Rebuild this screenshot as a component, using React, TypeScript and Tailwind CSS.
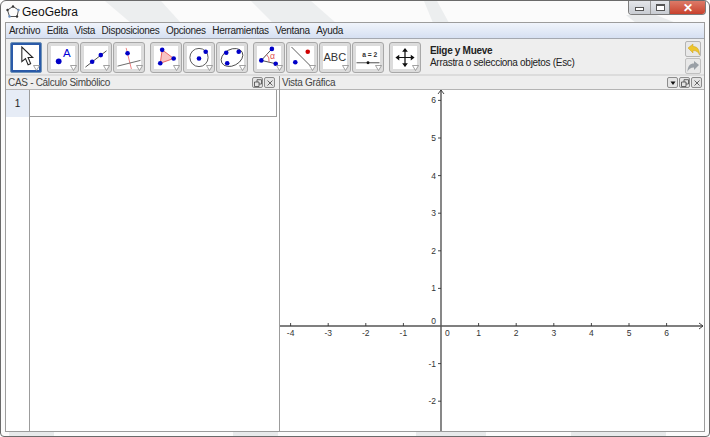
const font = "font-['Liberation_Sans',Arial,sans-serif]";

function Arrow() {
    return (
        <svg className="absolute right-[1px] bottom-[1px]" width="7" height="6" viewBox="0 0 7 6">
            <path d="M0.500 0.500h6L3.500 5.500z" fill="#fff" stroke="#8a8a8a" strokeWidth="0.8" />
        </svg>
    );
}

function ToolButton({ selected, arrow = true, children }: { selected?: boolean, arrow?: boolean, children: React.ReactNode }) {
    return (
        <div className={selected
            ? "relative w-[32px] h-[31px] rounded-[2px] border border-[#6f93b8] bg-[#2a5aa8] p-[2px]"
            : "relative w-[32px] h-[31px] rounded-[3px] border border-[#a8a8a8] bg-[#dcdcdc] p-[3px]"}>
            <div className="w-full h-full bg-white overflow-hidden">
                <svg width="100%" height="100%" viewBox="0 0 24 24">{children}</svg>
            </div>
            {arrow && <Arrow />}
        </div>
    );
}

const dot = (x: number, y: number, r = 2.4, c = "#0000c8") => <circle cx={x} cy={y} r={r} fill={c} />;

function Toolbar() {
    return (
        <div className="h-[38px] bg-[#eeeeee] border-t border-[#a4a8b0] border-b-2 border-b-[#dcdcdc] flex items-start pt-[3px] pl-[4px] pr-[3px]">
            <div className="flex gap-[5px]">
                <ToolButton selected>
                    <path d="M8 2v14l3.500-3 2.500 6 2.500-1-2.500-6h4.500z" fill="#fff" stroke="#222" strokeWidth="1" />
                </ToolButton>
                <div className="flex gap-[1px]">
                    <ToolButton>
                        {dot(7.500, 16, 3)}
                        <text x="12" y="11" fontSize="12" fill="#0000d8" fontFamily="Liberation Sans">A</text>
                    </ToolButton>
                    <ToolButton>
                        <path d="M1 22 23 5" stroke="#333" strokeWidth="0.9" />
                        {dot(8, 16.500)}{dot(17, 9.500)}
                    </ToolButton>
                    <ToolButton>
                        <path d="M9 2l6 24" stroke="#f08080" strokeWidth="1" />
                        <path d="M0 21 24 15" stroke="#555" strokeWidth="0.9" />
                        {dot(10.500, 7.500)}
                    </ToolButton>
                </div>
                <div className="flex gap-[1px]">
                    <ToolButton>
                        <path d="M8 4l12 9-14 5z" fill="#f8c4c4" stroke="#e86060" strokeWidth="1" />
                        {dot(8, 4)}{dot(20, 13)}{dot(6, 18)}
                    </ToolButton>
                    <ToolButton>
                        <circle cx="12" cy="12" r="9.500" fill="none" stroke="#444" strokeWidth="0.9" />
                        {dot(12, 13)}{dot(19, 6)}
                    </ToolButton>
                    <ToolButton>
                        <ellipse cx="12" cy="12" rx="12" ry="8.500" transform="rotate(-28 12 12)" fill="none" stroke="#444" strokeWidth="0.9" />
                        {dot(6, 7)}{dot(19, 6)}{dot(7, 18)}
                    </ToolButton>
                </div>
                <div className="flex gap-[1px]">
                    <ToolButton>
                        <path d="M15 3 4 15l15 3.500" fill="none" stroke="#333" strokeWidth="0.9" />
                        <path d="M9.500 9a8 8 0 0 1 2.500 7.500" fill="none" stroke="#e05050" strokeWidth="0.9" />
                        <text x="13" y="14" fontSize="9" fill="#e05050" fontFamily="Liberation Sans">α</text>
                        {dot(15, 3)}{dot(4, 15)}{dot(19, 18.500)}
                    </ToolButton>
                    <ToolButton>
                        <path d="M1 1 23 23" stroke="#444" strokeWidth="0.9" />
                        {dot(5, 17)}{dot(18, 6, 2.400, "#d00000")}
                    </ToolButton>
                    <ToolButton>
                        <text x="0" y="16" fontSize="11.500" fill="#333" fontFamily="Liberation Sans">ABC</text>
                    </ToolButton>
                    <ToolButton>
                        <text x="6" y="11" fontSize="7" fontWeight="700" fill="#333" fontFamily="Liberation Sans">a = 2</text>
                        <path d="M0 17.500H24" stroke="#333" strokeWidth="0.9" />
                        {dot(12, 17.500, 1.500, "#111")}
                    </ToolButton>
                </div>
                <ToolButton>
                    <path d="M12 3v18M3 12h18" stroke="#111" strokeWidth="1.300" />
                    <path d="M12 2l3 4H9zM12 22l3-4H9zM2 12l4-3v6zM22 12l-4-3v6z" fill="#111" />
                </ToolButton>
            </div>
            <div className="ml-[9px] mt-[3px] flex-1 text-[10px] tracking-[-0.3px] leading-[12px] text-[#222]">
                <div className="font-bold">Elige y Mueve</div>
                <div>Arrastra o selecciona objetos (Esc)</div>
            </div>
            <div className="flex flex-col gap-[1px] -mt-[1px]">
                <div className="w-[16px] h-[16px] rounded-[2px] border border-[#b4b4b4] bg-[#e8e8e8] flex items-center justify-center">
                    <svg width="13" height="13" viewBox="0 0 13 13"><path d="M1 5l5-4v2.500c4 0 6.500 2.500 6.500 8.500-1-3-3-4.500-6.500-4.500V10z" fill="#eec52c" stroke="#c8a020" strokeWidth="0.5" /></svg>
                </div>
                <div className="w-[16px] h-[16px] rounded-[2px] border border-[#c0c0c0] bg-[#e8e8e8] flex items-center justify-center">
                    <svg width="13" height="13" viewBox="0 0 13 13"><path d="M12 5 7 1v2.500C3 3.500 0.500 6 0.500 12c1-3 3-4.500 6.500-4.500V10z" fill="#9aa0a6" /></svg>
                </div>
            </div>
        </div>
    );
}

function HeaderButton({ children }: { children: React.ReactNode }) {
    return (
        <div className="w-[11px] h-[11px] rounded-[2px] border border-[#8c8c8c] bg-[#e4e4e4] flex items-center justify-center">
            <svg width="8" height="8" viewBox="0 0 8 8">{children}</svg>
        </div>
    );
}

const restore = <path d="M0.500 3h4.500v4.500H0.500zM3 3V0.700h4.500v4.300H5" fill="none" stroke="#444" strokeWidth="0.8" />;
const close = <path d="M1.500 1.500l5 5M6.500 1.500l-5 5" stroke="#555" strokeWidth="0.9" />;

const xTicks = [-4, -3, -2, -1, 1, 2, 3, 4, 5, 6];
const yTicks = [6, 5, 4, 3, 2, 1, -1, -2];
const ox = 161;
const oy = 236;
const unit = 37.600;

function Graph() {
    return (
        <svg className="block w-full h-full" viewBox="0 0 424 341" fontFamily="Liberation Sans" fontSize="8.500" fill="#333">
            <path d={`M0 ${oy}H423`} stroke="#555" strokeWidth="1.400" />
            <path d={`M${ox} 0V341`} stroke="#555" strokeWidth="1.400" />
            <path d={`M419 ${oy - 3}l4 3-4 3M${ox - 3} 4l3-4 3 4`} fill="none" stroke="#333" strokeWidth="0.9" />
            {xTicks.map(t => (
                <g key={t}>
                    <path d={`M${ox + t * unit} ${oy - 3}v3`} stroke="#333" strokeWidth="0.9" />
                    <text x={ox + t * unit} y={oy + 10} textAnchor="middle">{t}</text>
                </g>
            ))}
            {yTicks.map(t => (
                <g key={t}>
                    <path d={`M${ox - 3} ${oy - t * unit}h3`} stroke="#333" strokeWidth="0.9" />
                    <text x={ox - 5} y={oy - t * unit + 3} textAnchor="end">{t}</text>
                </g>
            ))}
            <text x={ox - 5} y={oy - 2} textAnchor="end">0</text>
            <text x={ox + 4} y={oy + 10}>0</text>
        </svg>
    );
}

export default function App() {
    return (
        <div className={`relative w-[710px] h-[437px] overflow-hidden bg-[#fbfbfb] border border-[#6a6a6a] rounded-t-[6px] rounded-b-[4px] ${font}`}>
            {/* aero glass streaks behind the title bar and under the bottom edge */}
            <svg className="absolute inset-0" width="710" height="437">
                <path d="M104 0h56l20 22h-50zM250 0h60l25 22h-63zM423 0h13l12 22h-16z" fill="#e6e8ea" opacity="0.7" />
                <path d="M625 14h30l20 8h-40zM8 431h45v5H8zM232 431h45v5h-45zM415 431h70v5h-70zM570 431h95v5h-95z" fill="#e0e2e4" opacity="0.7" />
            </svg>
            <div className="relative flex h-[21px]">
                <div className="flex items-center pl-[5px] pt-[1px] gap-[2px] text-[12px] text-[#111]">
                    <svg width="14" height="14" viewBox="0 0 14 14">
                        <path d="M7 1.500 12.500 5 11 11.500H3.500L1.500 5z" fill="none" stroke="#555" strokeWidth="1" />
                        <circle cx="7" cy="1.500" r="1.200" fill="#333" />
                        <circle cx="12.500" cy="5" r="1.200" fill="#6a8fc0" />
                        <circle cx="11" cy="11.500" r="1.200" fill="#333" />
                        <circle cx="3.500" cy="11.500" r="1.200" fill="#6a8fc0" />
                        <circle cx="1.500" cy="5" r="1.200" fill="#333" />
                    </svg>
                    GeoGebra
                </div>
                <div className="ml-auto mr-[3px] flex h-[14px] rounded-b-[4px] border border-t-0 border-[#7c7c7c] overflow-hidden">
                    <div className="w-[22px] bg-gradient-to-b from-[#e4e6ea] to-[#c8ccd2] border-r border-[#9a9a9a] flex items-center justify-center">
                        <div className="w-[9px] h-[4px] mt-[3px] border border-[#555] bg-white" />
                    </div>
                    <div className="w-[19px] bg-gradient-to-b from-[#e4e6ea] to-[#c8ccd2] border-r border-[#7c7c7c] flex items-center justify-center">
                        <div className="w-[9px] h-[7px] border border-[#555] border-t-2 bg-white" />
                    </div>
                    <div className="w-[35px] bg-gradient-to-b from-[#dc7a68] to-[#c8402c] flex items-center justify-center text-white text-[12px] font-bold leading-none">✕</div>
                </div>
            </div>

            <div className="relative mx-[4px] h-[410px] border border-[#9c9c9c] bg-white flex flex-col">
                <div className="h-[15px] bg-gradient-to-b from-[#f0f4fb] to-[#d6e0f2] flex items-center gap-[6.500px] pl-[3px] text-[10px] tracking-[-0.3px] text-[#222]">
                    {["Archivo", "Edita", "Vista", "Disposiciones", "Opciones", "Herramientas", "Ventana", "Ayuda"].map(m => <span key={m}>{m}</span>)}
                </div>
                <Toolbar />
                <div className="flex-1 flex min-h-0">
                    <div className="w-[274px] flex flex-col border-r border-[#9c9c9c]">
                        <div className="h-[14px] bg-[#eeeeee] border-b border-[#b4b4b4] flex items-center justify-between pl-[2px] pr-[4px] text-[10px] tracking-[-0.3px] text-[#444]">
                            <span>CAS - Cálculo Simbólico</span>
                            <div className="flex gap-[1px]">
                                <HeaderButton>{restore}</HeaderButton>
                                <HeaderButton>{close}</HeaderButton>
                            </div>
                        </div>
                        <div className="flex-1 flex">
                            <div className="w-[24px] bg-white border-r border-[#9c9c9c]">
                                <div className="h-[27px] bg-[#e6ecf6] flex items-center justify-center text-[10px] text-[#222]">1</div>
                            </div>
                            <div className="flex-1 pr-[2px]">
                                <div className="h-[27px] border-b border-r border-[#9c9c9c]" />
                            </div>
                        </div>
                    </div>
                    <div className="flex-1 flex flex-col min-w-0">
                        <div className="h-[14px] bg-[#eeeeee] border-b border-[#b4b4b4] flex items-center justify-between pl-[2px] pr-[2px] text-[10px] tracking-[-0.3px] text-[#444]">
                            <span>Vista Gráfica</span>
                            <div className="flex gap-[1px]">
                                <HeaderButton><path d="M1.500 2.500h5L4 6z" fill="#111" /></HeaderButton>
                                <HeaderButton>{restore}</HeaderButton>
                                <HeaderButton>{close}</HeaderButton>
                            </div>
                        </div>
                        <div className="flex-1 min-h-0">
                            <Graph />
                        </div>
                    </div>
                </div>
            </div>
        </div>
    );
}
